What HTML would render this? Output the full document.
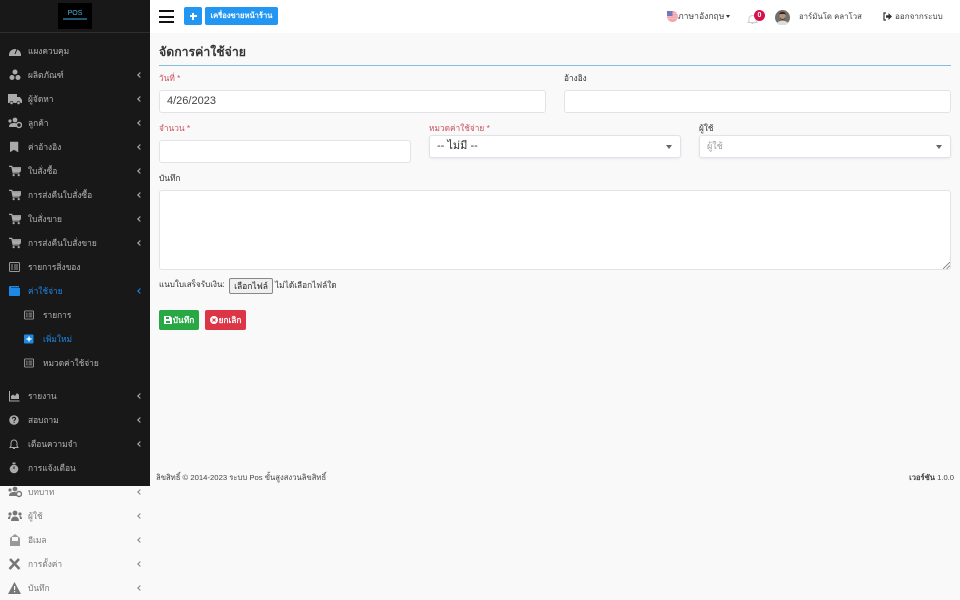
<!DOCTYPE html>
<html lang="th"><head><meta charset="utf-8"><title>POS</title>
<style>
*{box-sizing:border-box}
html,body{margin:0;padding:0;width:960px;height:600px;overflow:hidden;background:#f9f9f9;font-family:"Liberation Sans","Noto Sans CJK SC",sans-serif;font-size:9px;color:#333}
.a{position:absolute;white-space:nowrap}
#lightnav{position:absolute;left:0;top:486px;width:150px;height:114px;background:#f9f9f9}
#side{position:absolute;left:0;top:0;width:150px;height:486px;background:#181818}
.t{position:absolute;left:28px;font-size:8.4px;line-height:12px;color:#b5b5b5;white-space:nowrap;transform:translateY(-6px)}
.s{left:43px}
.c{position:absolute;left:138px;width:4px;height:4px;border-left:1.5px solid #b5b5b5;border-bottom:1.5px solid #b5b5b5;transform:translateY(-2px) rotate(45deg)}
.i{position:absolute;transform:translateY(-6px)}
.blue{color:#1e88e5}.bc{border-color:#1e88e5}
.light .t{color:#777}.light .c{border-color:#888}
.in{position:absolute;background:#fff;border:1px solid #e0e3e8;border-radius:3px}
.lab{position:absolute;font-size:8.300px;line-height:12px;white-space:nowrap;color:#333}
.red{color:#c9505c}
.sel{font-size:11px;line-height:20px;padding-left:7px;box-shadow:0 1px 2px #e6e8ee;white-space:nowrap}
.car{position:absolute;right:8px;top:9px;width:0;height:0;border:3.5px solid transparent;border-top:4px solid #666;border-bottom:0}
.btn{position:absolute;border-radius:2px;color:#fff;font-size:8.300px;font-weight:bold;text-align:center;white-space:nowrap}
</style></head><body>

<div id="lightnav" class="light">
<svg class="i" style="left:8px;top:6px" width="14" height="12" viewBox="0 0 14 12"><g fill="#777"><circle cx="7" cy="3" r="2.400"/><circle cx="2" cy="4" r="1.600"/><path d="M1 10c0-3 2-4 5-4s3 1 3 4z"/><circle cx="11" cy="8" r="2.500" fill="none" stroke="#777" stroke-width="1.500"/></g></svg>
<div class="t" style="top:6px">บทบาท</div><div class="c" style="top:6px"></div>
<svg class="i" style="left:8px;top:30px" width="14" height="12" viewBox="0 0 14 12"><g fill="#777"><circle cx="7" cy="3" r="2.400"/><circle cx="2" cy="4" r="1.600"/><circle cx="12" cy="4" r="1.600"/><path d="M3 11c0-3 2-4.500 4-4.500s4 1.500 4 4.500zM0 9c0-2 1-3 2.500-3l-.5 3zM14 9c0-2-1-3-2.500-3l.5 3z"/></g></svg>
<div class="t" style="top:30px">ผู้ใช้</div><div class="c" style="top:30px"></div>
<svg class="i" style="left:9px;top:54px" width="12" height="12" viewBox="0 0 12 12"><path d="M1 4l5-4 5 4v8H1z" fill="#999"/><rect x="3" y="3" width="6" height="4" fill="#f9f9f9"/></svg>
<div class="t" style="top:54px">อีเมล</div><div class="c" style="top:54px"></div>
<svg class="i" style="left:8px;top:78px" width="13" height="12" viewBox="0 0 13 12"><path d="M2 1l9.500 10M11 1L1.500 11" stroke="#777" stroke-width="2.600"/></svg>
<div class="t" style="top:78px">การตั้งค่า</div><div class="c" style="top:78px"></div>
<svg class="i" style="left:8px;top:102px" width="13" height="12" viewBox="0 0 13 12"><path d="M6.500 0L13 12H0z" fill="#777"/><rect x="6" y="4" width="1.200" height="4" fill="#f9f9f9"/><rect x="6" y="9" width="1.200" height="1.300" fill="#f9f9f9"/></svg>
<div class="t" style="top:102px">บันทึก</div><div class="c" style="top:102px"></div>
</div>

<div id="side">
<div class="a" style="left:0;top:32px;width:150px;height:1px;background:#2e2e2e"></div>
<div class="a" style="left:58px;top:3px;width:34px;height:26px;background:#000"></div>
<div class="a" style="left:58px;top:10px;width:34px;text-align:center;color:#4fb0d8;font-size:7px;line-height:7px">POS</div>
<div class="a" style="left:63px;top:18px;width:24px;height:1.500px;background:#1f5670"></div>

<svg class="i" style="left:9px;top:51px" width="12" height="12" viewBox="0 0 12 12"><path d="M0 10a6 6 0 1 1 12 0v1H0z" fill="#aaa"/><path d="M6 9l2-5" stroke="#181818"/></svg>
<div class="t" style="top:51px">แผงควบคุม</div>
<svg class="i" style="left:9px;top:75px" width="12" height="12" viewBox="0 0 12 12"><g fill="#aaa"><circle cx="6" cy="3" r="2.500"/><circle cx="3" cy="8.500" r="2.500"/><circle cx="9" cy="8.500" r="2.500"/></g></svg>
<div class="t" style="top:75px">ผลิตภัณฑ์</div><div class="c" style="top:75px"></div>
<svg class="i" style="left:8px;top:99px" width="14" height="12" viewBox="0 0 14 12"><path d="M0 1h9v3h3l2 3v3H0z" fill="#aaa"/><circle cx="3.500" cy="10" r="1.600" fill="#aaa" stroke="#181818" stroke-width=".6"/><circle cx="10.500" cy="10" r="1.600" fill="#aaa" stroke="#181818" stroke-width=".6"/></svg>
<div class="t" style="top:99px">ผู้จัดหา</div><div class="c" style="top:99px"></div>
<svg class="i" style="left:8px;top:123px" width="14" height="12" viewBox="0 0 14 12"><g fill="#aaa"><circle cx="7" cy="3" r="2.400"/><circle cx="2" cy="4" r="1.600"/><path d="M1 10c0-3 2-4 5-4s3 1 3 4z"/><circle cx="11" cy="8" r="2.500" fill="none" stroke="#aaa" stroke-width="1.500"/></g></svg>
<div class="t" style="top:123px">ลูกค้า</div><div class="c" style="top:123px"></div>
<svg class="i" style="left:10px;top:147px" width="9" height="12" viewBox="0 0 9 12"><path d="M0 1h8v10L4 8.500 0 11z" fill="#aaa" stroke="#aaa" stroke-width=".5"/></svg>
<div class="t" style="top:147px">ค่าอ้างอิง</div><div class="c" style="top:147px"></div>

<svg class="i" style="left:9px;top:171px" width="12" height="12" viewBox="0 0 13 12"><path d="M0 1h3l1.500 7h7M3.500 2.500H13l-1 4H4.500" fill="none" stroke="#aaa" stroke-width="1.300"/><path d="M4 3h8v3H4z" fill="#aaa"/><circle cx="5" cy="10.500" r="1.200" fill="#aaa"/><circle cx="10.500" cy="10.500" r="1.200" fill="#aaa"/></svg>
<div class="t" style="top:171px">ใบสั่งซื้อ</div><div class="c" style="top:171px"></div>
<svg class="i" style="left:9px;top:195px" width="12" height="12" viewBox="0 0 13 12"><path d="M0 1h3l1.500 7h7M3.500 2.500H13l-1 4H4.500" fill="none" stroke="#aaa" stroke-width="1.300"/><path d="M4 3h8v3H4z" fill="#aaa"/><circle cx="5" cy="10.500" r="1.200" fill="#aaa"/><circle cx="10.500" cy="10.500" r="1.200" fill="#aaa"/></svg>
<div class="t" style="top:195px">การส่งคืนใบสั่งซื้อ</div><div class="c" style="top:195px"></div>
<svg class="i" style="left:9px;top:219px" width="12" height="12" viewBox="0 0 13 12"><path d="M0 1h3l1.500 7h7M3.500 2.500H13l-1 4H4.500" fill="none" stroke="#aaa" stroke-width="1.300"/><path d="M4 3h8v3H4z" fill="#aaa"/><circle cx="5" cy="10.500" r="1.200" fill="#aaa"/><circle cx="10.500" cy="10.500" r="1.200" fill="#aaa"/></svg>
<div class="t" style="top:219px">ใบสั่งขาย</div><div class="c" style="top:219px"></div>
<svg class="i" style="left:9px;top:243px" width="12" height="12" viewBox="0 0 13 12"><path d="M0 1h3l1.500 7h7M3.500 2.500H13l-1 4H4.500" fill="none" stroke="#aaa" stroke-width="1.300"/><path d="M4 3h8v3H4z" fill="#aaa"/><circle cx="5" cy="10.500" r="1.200" fill="#aaa"/><circle cx="10.500" cy="10.500" r="1.200" fill="#aaa"/></svg>
<div class="t" style="top:243px">การส่งคืนใบสั่งขาย</div><div class="c" style="top:243px"></div>
<svg class="i" style="left:8.500px;top:267px" width="11" height="12" viewBox="0 0 11 12"><rect x=".5" y="1.500" width="10" height="9" rx="1" fill="none" stroke="#999"/><path d="M2 4h2M2 6h2M2 8h2M5 4h4M5 6h4M5 8h4" stroke="#999"/></svg>
<div class="t" style="top:267px">รายการสิ่งของ</div>

<svg class="i" style="left:8.500px;top:291px" width="11" height="12" viewBox="0 0 11 12"><path d="M1 1h9v1.500H2V3h9v7a1 1 0 0 1-1 1H1a1 1 0 0 1-1-1V2a1 1 0 0 1 1-1z" fill="#1e88e5"/></svg>
<div class="t blue" style="top:291px">ค่าใช้จ่าย</div><div class="c bc" style="top:291px"></div>

<svg class="i" style="left:24px;top:315px" width="10" height="12" viewBox="0 0 11 12"><rect x=".5" y="1.500" width="10" height="9" rx="1" fill="none" stroke="#999"/><path d="M2 4h2M2 6h2M2 8h2M5 4h4M5 6h4M5 8h4" stroke="#999"/></svg>
<div class="t s" style="top:315px">รายการ</div>
<svg class="i" style="left:24px;top:339px" width="10" height="12" viewBox="0 0 10 12"><rect y="1.500" width="9.500" height="9" rx="1" fill="#1e88e5"/><path d="M5 3.500v5M2.500 6h5" stroke="#fff" stroke-width="1.400"/></svg>
<div class="t s blue" style="top:339px">เพิ่มใหม่</div>
<svg class="i" style="left:24px;top:363px" width="10" height="12" viewBox="0 0 11 12"><rect x=".5" y="1.500" width="10" height="9" rx="1" fill="none" stroke="#999"/><path d="M2 4h2M2 6h2M2 8h2M5 4h4M5 6h4M5 8h4" stroke="#999"/></svg>
<div class="t s" style="top:363px">หมวดค่าใช้จ่าย</div>

<svg class="i" style="left:8.500px;top:396px" width="11" height="12" viewBox="0 0 11 12"><path d="M.5 1v10h10" fill="none" stroke="#aaa"/><path d="M2 9V6l2-1.500L6 6l2-3 2 2v4z" fill="#aaa"/></svg>
<div class="t" style="top:396px">รายงาน</div><div class="c" style="top:396px"></div>
<svg class="i" style="left:9px;top:420px" width="11" height="12" viewBox="0 0 11 12"><circle cx="5" cy="6" r="4.800" fill="#aaa"/><path d="M3.500 4.800c0-2 3-2 3 0 0 1.200-1.500 1.200-1.500 2.200" fill="none" stroke="#181818" stroke-width="1.100"/><rect x="4.500" y="7.800" width="1.100" height="1.100" fill="#181818"/></svg>
<div class="t" style="top:420px">สอบถาม</div><div class="c" style="top:420px"></div>
<svg class="i" style="left:9px;top:444px" width="10" height="12" viewBox="0 0 10 12"><path d="M2 8V5a3 3 0 0 1 6 0v3l1 1.500H1z" fill="none" stroke="#aaa"/><path d="M4 10.500h2" stroke="#aaa"/></svg>
<div class="t" style="top:444px">เตือนความจำ</div><div class="c" style="top:444px"></div>
<svg class="i" style="left:9px;top:468px" width="10" height="12" viewBox="0 0 10 12"><circle cx="5" cy="7" r="4.300" fill="#aaa"/><rect x="3.500" y=".5" width="3" height="1.800" fill="#aaa"/><path d="M5 4.500V7" stroke="#181818"/></svg>
<div class="t" style="top:468px">การแจ้งเตือน</div>
</div>

<!-- top bar -->
<div class="a" style="left:150px;top:0;width:810px;height:33px;background:#fff"></div>
<div class="a" style="left:159px;top:10px;width:15px;height:2px;background:#111"></div>
<div class="a" style="left:159px;top:16px;width:15px;height:2px;background:#111"></div>
<div class="a" style="left:159px;top:21px;width:15px;height:2px;background:#111"></div>
<div class="a" style="left:184px;top:7px;width:18px;height:18px;background:#2196f3;border-radius:2px"></div>
<div class="a" style="left:189.500px;top:15px;width:7px;height:2px;background:#fff"></div>
<div class="a" style="left:192px;top:12.500px;width:2px;height:7px;background:#fff"></div>
<div class="btn" style="left:205px;top:7px;width:73px;height:18px;background:#2196f3;line-height:18px;font-size:7.600px">เครื่องขายหน้าร้าน</div>

<svg class="a" style="left:667px;top:11px" width="11" height="11" viewBox="0 0 11 11"><circle cx="5.500" cy="5.500" r="5.500" fill="#f2a5ac"/><path d="M0 2.500h11M0 5h11M0 7.500h11" stroke="#fff" stroke-width=".4" opacity=".6"/><path d="M0 0h5.500v5H0z" fill="#7078b8"/></svg>
<div class="a" style="left:678px;top:10px;font-size:8.600px;line-height:13px;color:#444">ภาษาอังกฤษ</div>
<div class="a" style="left:726px;top:15px;width:0;height:0;border:2.500px solid transparent;border-top:3px solid #333;border-bottom:0"></div>
<svg class="a" style="left:747px;top:13px" width="11" height="12" viewBox="0 0 11 12"><path d="M2 8V6a3.500 3.500 0 0 1 7 0v2l1 1.500H1zM4.500 10.500h2" fill="none" stroke="#ccc"/></svg>
<div class="a" style="left:754px;top:10px;width:11px;height:11px;border-radius:50%;background:#d6124a;color:#fff;font-size:7px;font-weight:bold;line-height:11px;text-align:center">0</div>
<svg class="a" style="left:775px;top:10px" width="15" height="15" viewBox="0 0 15 15"><circle cx="7.500" cy="7.500" r="7.500" fill="#6f6f6c"/><circle cx="7.500" cy="6" r="3.200" fill="#b8917b"/><path d="M4 5c0-4 7-4 7 0l-1-1H5z" fill="#2f2420"/><path d="M5 7.500c1 2 4 2 5 0v1.500l-2.500 1-2.500-1z" fill="#4a3a32"/><path d="M2 13c2-3 9-3 11 0l-2 2H4z" fill="#ddd"/></svg>
<div class="a" style="left:799px;top:10px;font-size:7.800px;line-height:13px;color:#444">อาร์มันโด คลาโวส</div>
<svg class="a" style="left:883px;top:12px" width="9" height="9" viewBox="0 0 9 9"><path d="M3 1H1v7h2" fill="none" stroke="#333" stroke-width="1.200"/><path d="M3 3.200h2.500V1L9 4.500 5.500 8V5.800H3z" fill="#333"/></svg>
<div class="a" style="left:895px;top:10px;font-size:8.100px;line-height:13px;color:#444">ออกจากระบบ</div>

<!-- content -->
<div class="a" style="left:159px;top:44px;font-size:12.300px;line-height:17px;font-weight:bold;color:#333">จัดการค่าใช้จ่าย</div>
<div class="a" style="left:159px;top:65px;width:792px;height:1px;background:#86bfdc"></div>

<div class="lab red" style="left:159px;top:72px">วันที่ *</div>
<div class="in" style="left:159px;top:90px;width:387px;height:23px;font-size:11px;line-height:21px;padding-left:7px;color:#444">4/26/2023</div>
<div class="lab" style="left:564px;top:72px">อ้างอิง</div>
<div class="in" style="left:564px;top:90px;width:387px;height:23px"></div>

<div class="lab red" style="left:159px;top:122px">จำนวน *</div>
<div class="in" style="left:159px;top:140px;width:252px;height:23px"></div>
<div class="lab red" style="left:429px;top:122px">หมวดค่าใช้จ่าย *</div>
<div class="in sel" style="left:429px;top:135px;width:252px;height:23px;color:#333">-- ไม่มี --<div class="car"></div></div>
<div class="lab" style="left:699px;top:122px">ผู้ใช้</div>
<div class="in sel" style="left:699px;top:135px;width:252px;height:23px;color:#999;font-size:9px">ผู้ใช้<div class="car"></div></div>

<div class="lab" style="left:159px;top:172px">บันทึก</div>
<div class="in" style="left:159px;top:190px;width:792px;height:80px"></div>
<svg class="a" style="left:943px;top:262px" width="7" height="7" viewBox="0 0 7 7"><path d="M0 7l7-7M3.500 7L7 3.500" stroke="#777" stroke-width=".8"/></svg>

<div class="lab" style="left:159px;top:279px;font-size:8.100px">แนบใบเสร็จรับเงิน:</div>
<div class="a" style="left:229px;top:278px;width:44px;height:16px;background:#efefef;border:1px solid #888;border-radius:2px;font-size:8.500px;line-height:14px;text-align:center;color:#222">เลือกไฟล์</div>
<div class="lab" style="left:275px;top:279px">ไม่ได้เลือกไฟล์ใด</div>

<div class="btn" style="left:159px;top:310px;width:40px;height:20px;background:#28a745;line-height:20px;padding-left:9px">บันทึก</div>
<svg class="a" style="left:164px;top:316px" width="8" height="8" viewBox="0 0 8 8"><path d="M0 0h6l2 2v6H0z" fill="#fff"/><rect x="2" y="1" width="3" height="2" fill="#28a745"/><rect x="2" y="5" width="4" height="2" fill="#28a745"/></svg>
<div class="btn" style="left:205px;top:310px;width:41px;height:20px;background:#dc3545;line-height:20px;padding-left:9px">ยกเลิก</div>
<svg class="a" style="left:210px;top:315.500px" width="8" height="8" viewBox="0 0 8 8"><circle cx="4" cy="4" r="4" fill="#fff"/><path d="M2.500 2.500l3 3M5.500 2.500l-3 3" stroke="#dc3545" stroke-width="1.200"/></svg>

<div class="a" style="left:156px;top:471px;font-size:7.700px;line-height:13px;color:#444">ลิขสิทธิ์ © 2014-2023 ระบบ Pos ขั้นสูงสงวนลิขสิทธิ์</div>
<div class="a" style="right:6px;top:471px;font-size:7.600px;line-height:13px;color:#444"><b>เวอร์ชัน</b> 1.0.0</div>
</body></html>
